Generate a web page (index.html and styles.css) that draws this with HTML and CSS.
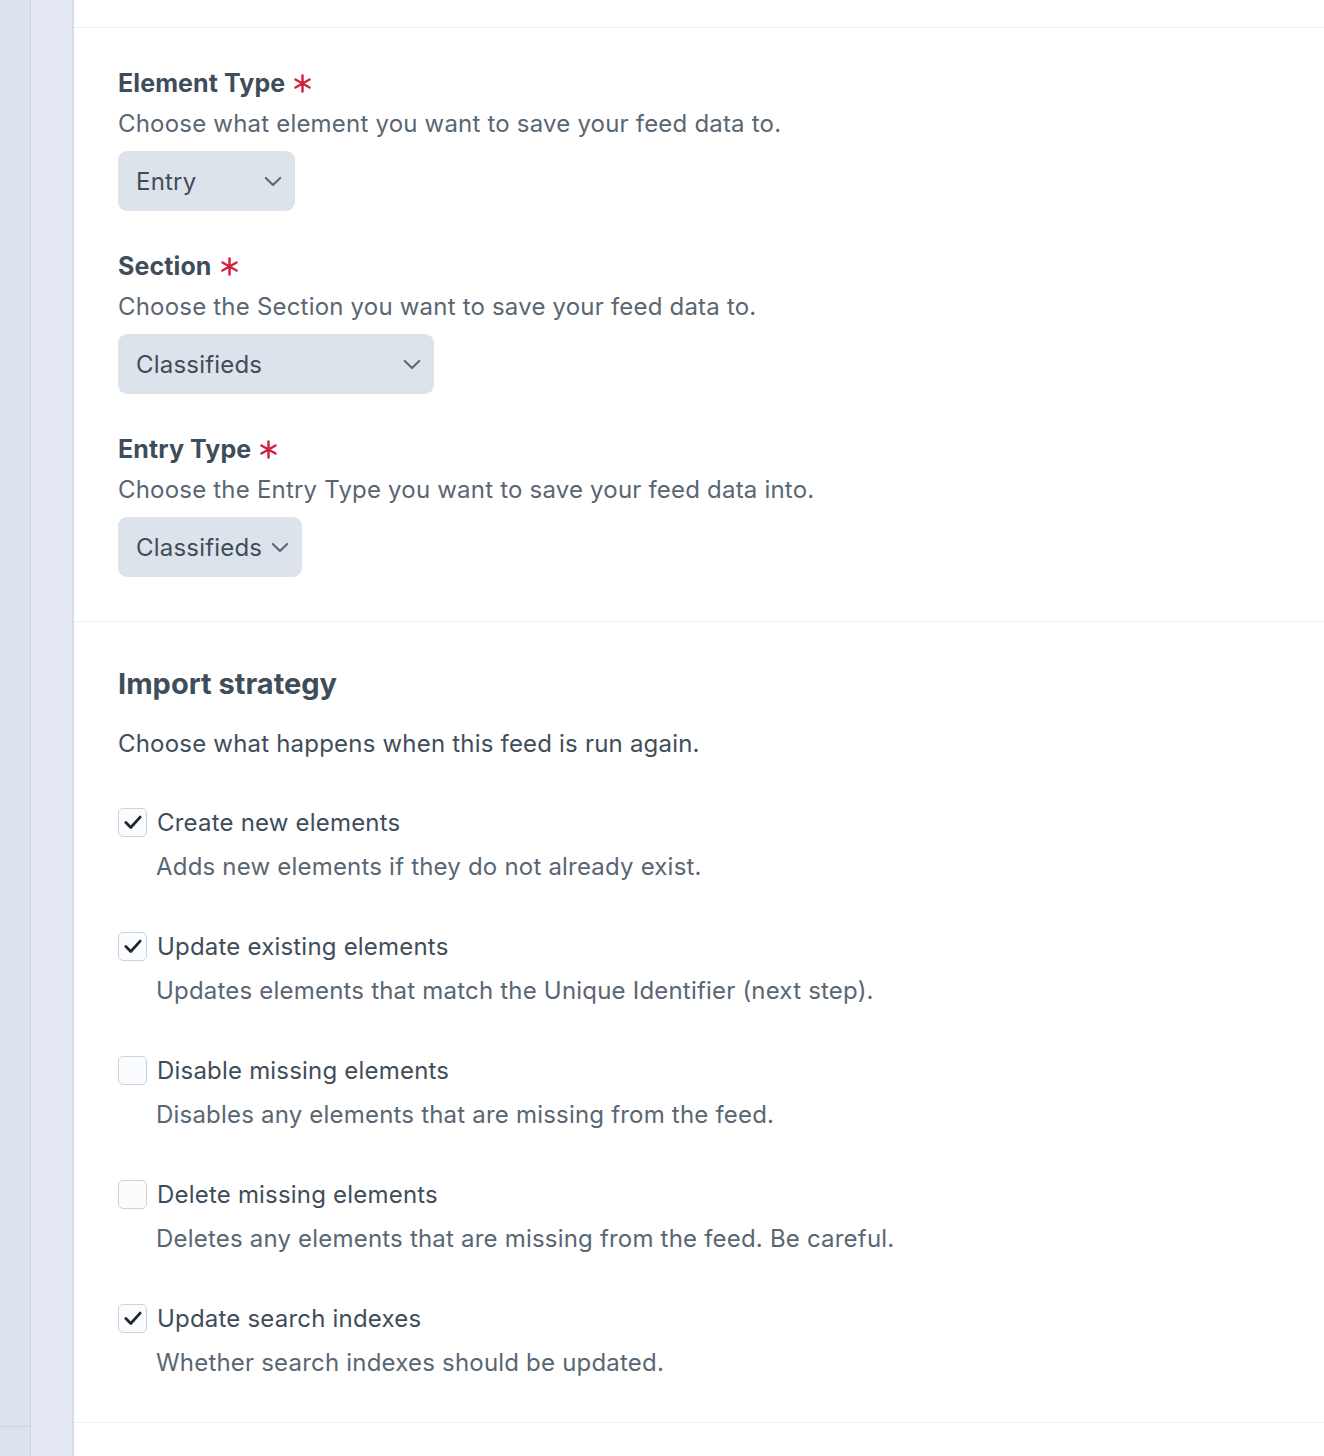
FILE: index.html
```html
<!DOCTYPE html>
<html lang="en">
<head>
<meta charset="utf-8">
<title>Feed settings</title>
<link rel="stylesheet" href="styles.css">
</head>
<body>
<div class="page">
  <aside class="rail">
    <div class="rail-top"></div>
    <div class="rail-bottom"></div>
  </aside>
  <div class="gutter"></div>
  <main class="content">
    <div class="top-strip"></div>

    <section class="panel panel-first">
      <div class="field">
        <div class="label">Element Type <svg class="req" viewBox="0 0 20 20"><path d="M10 1.5v17M2.6 5.75l14.8 8.5M2.6 14.25l14.8-8.5"/></svg></div>
        <div class="instr">Choose what element you want to save your feed data to.</div>
        <div class="select sel-entry"><span>Entry</span><svg class="chev" viewBox="0 0 20 12"><path d="M2 2l8 8 8-8"/></svg></div>
      </div>
      <div class="field">
        <div class="label">Section <svg class="req" viewBox="0 0 20 20"><path d="M10 1.5v17M2.6 5.75l14.8 8.5M2.6 14.25l14.8-8.5"/></svg></div>
        <div class="instr">Choose the Section you want to save your feed data to.</div>
        <div class="select sel-section"><span>Classifieds</span><svg class="chev" viewBox="0 0 20 12"><path d="M2 2l8 8 8-8"/></svg></div>
      </div>
      <div class="field">
        <div class="label">Entry Type <svg class="req" viewBox="0 0 20 20"><path d="M10 1.5v17M2.6 5.75l14.8 8.5M2.6 14.25l14.8-8.5"/></svg></div>
        <div class="instr">Choose the Entry Type you want to save your feed data into.</div>
        <div class="select sel-type"><span>Classifieds</span><svg class="chev" viewBox="0 0 20 12"><path d="M2 2l8 8 8-8"/></svg></div>
      </div>
    </section>

    <section class="panel panel-second">
      <h2 class="heading">Import strategy</h2>
      <p class="lead">Choose what happens when this feed is run again.</p>
      <div class="checks">
        <div class="check">
          <div class="check-row"><span class="box on"><svg viewBox="0 0 20 20"><path d="M3.5 10.5l4.5 4.5 8.5-9.5"/></svg></span><span class="check-label">Create new elements</span></div>
          <div class="check-desc">Adds new elements if they do not already exist.</div>
        </div>
        <div class="check">
          <div class="check-row"><span class="box on"><svg viewBox="0 0 20 20"><path d="M3.5 10.5l4.5 4.5 8.5-9.5"/></svg></span><span class="check-label">Update existing elements</span></div>
          <div class="check-desc">Updates elements that match the Unique Identifier (next step).</div>
        </div>
        <div class="check">
          <div class="check-row"><span class="box"></span><span class="check-label">Disable missing elements</span></div>
          <div class="check-desc">Disables any elements that are missing from the feed.</div>
        </div>
        <div class="check">
          <div class="check-row"><span class="box"></span><span class="check-label">Delete missing elements</span></div>
          <div class="check-desc">Deletes any elements that are missing from the feed. Be careful.</div>
        </div>
        <div class="check">
          <div class="check-row"><span class="box on"><svg viewBox="0 0 20 20"><path d="M3.5 10.5l4.5 4.5 8.5-9.5"/></svg></span><span class="check-label">Update search indexes</span></div>
          <div class="check-desc">Whether search indexes should be updated.</div>
        </div>
      </div>
    </section>
    <div class="bottom-strip"></div>
  </main>
</div>
</body>
</html>
```

FILE: styles.css
```css
* { box-sizing: border-box; }
html, body { margin: 0; padding: 0; }
body {
  font-family: Inter, "Noto Sans", "Liberation Sans", sans-serif;
  color: #3f4d5a;
  background: #ffffff;
  letter-spacing: 0.2px;
}
.page {
  display: flex;
  min-height: 1456px;
  height: 1456px;
  overflow: hidden;
}
.rail {
  width: 31px;
  flex: 0 0 31px;
  background: #dde3ed;
  border-right: 1px solid #cdd5e0;
  display: flex;
  flex-direction: column;
}
.rail-top { height: 1426px; }
.rail-bottom { flex: 1; border-top: 1px solid #cbd3de; }
.gutter {
  width: 43px;
  flex: 0 0 43px;
  background: #e4e9f3;
  border-right: 2px solid #d6dce7;
}
.content {
  flex: 1;
  background: #fff;
  display: flex;
  flex-direction: column;
}
.top-strip {
  height: 28px;
  border-bottom: 1px solid #edf0f4;
}
.panel {
  padding-left: 44px;
}
.panel-first {
  padding-top: 38px;
  padding-bottom: 44px;
  border-bottom: 1px solid #edf0f4;
  display: flex;
  flex-direction: column;
  gap: 38px;
}
.field { display: flex; flex-direction: column; }
.label {
  font-weight: 700;
  font-size: 25px;
  line-height: 34px;
  letter-spacing: 0.1px;
  color: #3f4d5a;
  display: flex;
  align-items: center;
  gap: 8px;
}
.req {
  width: 19px;
  height: 19px;
  fill: none;
  stroke: #d0213f;
  stroke-width: 2.6;
  stroke-linecap: round;
}
.instr {
  font-size: 24px;
  line-height: 34px;
  margin-top: 7px;
  color: #596673;
}
.select {
  margin-top: 10px;
  height: 60px;
  background: #dde3ea;
  border-radius: 9px;
  display: flex;
  align-items: center;
  justify-content: space-between;
  padding: 0 13px 0 18px;
  font-size: 24px;
  color: #3f4d5a;
  align-self: flex-start;
}
.sel-entry { width: 177px; }
.sel-section { width: 316px; }
.sel-type { width: 184px; padding-right: 13px; }
.chev {
  width: 18px;
  height: 11px;
  fill: none;
  stroke: #5d6a78;
  stroke-width: 2.4;
  stroke-linecap: round;
  stroke-linejoin: round;
}
.panel-second {
  padding-top: 44px;
  padding-bottom: 42px;
  border-bottom: 1px solid #edf0f4;
}
.heading {
  margin: 0;
  font-size: 29px;
  line-height: 36px;
  font-weight: 700;
  letter-spacing: 0;
  color: #3f4d5a;
}
.lead {
  margin: 25px 0 0;
  font-size: 24px;
  line-height: 34px;
  color: #3f4d5a;
}
.checks {
  margin-top: 44px;
  display: flex;
  flex-direction: column;
  gap: 45px;
}
.check { display: flex; flex-direction: column; }
.check-row {
  display: flex;
  align-items: center;
  gap: 10px;
  height: 34px;
}
.box {
  width: 29px;
  height: 29px;
  border: 1px solid #cbd3dd;
  border-radius: 5px;
  background: #fbfcfd;
  display: flex;
  align-items: center;
  justify-content: center;
}
.box svg {
  width: 22px;
  height: 22px;
  fill: none;
  stroke: #1c2631;
  stroke-width: 2.5;
  stroke-linecap: round;
  stroke-linejoin: round;
}
.check-label {
  font-size: 24px;
  color: #3f4d5a;
}
.check-desc {
  margin-top: 11px;
  margin-left: 38px;
  font-size: 24px;
  line-height: 34px;
  color: #596673;
}
.bottom-strip { flex: 1; }
```
